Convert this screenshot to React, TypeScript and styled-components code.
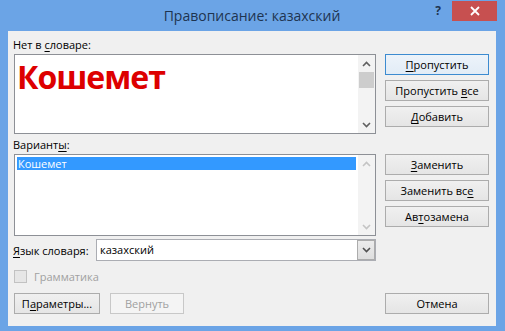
import styled, { createGlobalStyle } from "styled-components";

const GlobalStyle = createGlobalStyle`
  html, body {
    margin: 0;
    padding: 0;
    background: #6ba4e6;
  }
  * {
    box-sizing: border-box;
  }
`;

const Window = styled.div`
  width: 505px;
  height: 331px;
  background: #6ba4e6;
  display: flex;
  flex-direction: column;
  padding: 0 9px 5px 8px;
  font-family: "Open Sans", "Noto Sans", sans-serif;
  font-size: 11px;
  color: #000;
`;

const TitleBar = styled.div`
  height: 31px;
  display: grid;
  grid-template-columns: 1fr auto 1fr;
  align-items: start;
`;

const Title = styled.div`
  grid-column: 2;
  padding-top: 6px;
  font-size: 14px;
  color: #1e3450;
  white-space: nowrap;
`;

const Controls = styled.div`
  grid-column: 3;
  justify-self: end;
  display: flex;
  align-items: flex-start;
  margin-right: -1px;
`;

const HelpButton = styled.div`
  width: 28px;
  height: 21px;
  display: flex;
  align-items: center;
  justify-content: center;
  font-size: 12px;
  font-weight: 700;
  color: #1e3450;
`;

const CloseButton = styled.div`
  width: 45px;
  height: 20px;
  margin-top: 1px;
  background: #c75050;
  display: flex;
  align-items: center;
  justify-content: center;
`;

const Client = styled.div`
  flex: 1;
  background: #f0f0f0;
  display: grid;
  grid-template-columns: 362px 104px;
  column-gap: 9px;
  grid-template-rows: 17px 80px 20px 82px 25px 32px 21px;
  padding: 6px 7px 12px 6px;
`;

const Label = styled.div`
  grid-column: 1;
  display: flex;
  align-items: flex-end;
  line-height: 16px;
  margin-left: -1px;
  padding-bottom: 1px;
  white-space: nowrap;
`;

const Key = styled.span`
  text-decoration: underline;
  text-underline-offset: 2px;
`;

const Field = styled.div`
  border: 1px solid #8d9096;
  background: #fff;
  display: flex;
`;

const FieldContent = styled.div`
  flex: 1;
  padding: 2px;
  overflow: hidden;
`;

const Misspelled = styled.div`
  color: #dd0000;
  font-weight: 700;
  font-size: 32px;
  line-height: 40px;
  letter-spacing: -1px;
`;

const Selected = styled.div`
  background: #3399ff;
  color: #fff;
  height: 13px;
  line-height: 13px;
  padding-left: 1px;
`;

const ScrollBar = styled.div`
  width: 17px;
  display: flex;
  flex-direction: column;
  background: #f3f3f3;
`;

const Arrow = styled.div`
  height: 17px;
  display: flex;
  align-items: center;
  justify-content: center;
`;

const Track = styled.div`
  flex: 1;
  display: flex;
  flex-direction: column;
`;

const Thumb = styled.div`
  height: 16px;
  margin: 0 1px;
  background: #cdcdcd;
`;

const ButtonStack = styled.div`
  grid-column: 2;
  display: flex;
  flex-direction: column;
  gap: 5px;
`;

const Button = styled.div<{ $default?: boolean; $disabled?: boolean; $width?: number }>`
  height: 21px;
  width: ${(p) => (p.$width ? `${p.$width}px` : "auto")};
  display: flex;
  align-items: center;
  justify-content: center;
  white-space: nowrap;
  border: 1px solid
    ${(p) => (p.$default ? "#3c8bd0" : p.$disabled ? "#c8c8c8" : "#acacac")};
  background: ${(p) =>
    p.$disabled
      ? "#f4f4f4"
      : p.$default
      ? "linear-gradient(#ecf3fa, #e2ecf6)"
      : "linear-gradient(#f0f0f0, #e5e5e5)"};
  color: ${(p) => (p.$disabled ? "#a0a0a0" : "#000")};
`;

const LangRow = styled.div`
  grid-column: 1;
  display: flex;
  align-items: center;
  padding-top: 3px;
`;

const LangLabel = styled.div`
  width: 83px;
  margin-left: -1px;
  white-space: nowrap;
`;

const Combo = styled.div`
  flex: 1;
  height: 22px;
  border: 1px solid #abadb3;
  background: #fff;
  display: flex;
`;

const ComboText = styled.div`
  flex: 1;
  padding-left: 3px;
  line-height: 20px;
`;

const ComboDrop = styled.div`
  width: 18px;
  border: 1px solid #acacac;
  background: linear-gradient(#ececec, #dedede);
  display: flex;
  align-items: center;
  justify-content: center;
`;

const CheckRow = styled.div`
  grid-column: 1;
  display: flex;
  align-items: center;
  gap: 7px;
  color: #a0a0a0;
  padding-bottom: 2px;
`;

const CheckBox = styled.div`
  width: 13px;
  height: 13px;
  border: 1px solid #c2c2c2;
  background: #e6e6e6;
`;

const BottomLeft = styled.div`
  grid-column: 1;
  display: flex;
  gap: 10px;
`;

const Chevron = ({ up, color }: { up?: boolean; color: string }) => (
  <svg width="9" height="6" viewBox="0 0 9 6">
    <path
      d={up ? "M1 5 L4.5 1.5 L8 5" : "M1 1 L4.5 4.5 L8 1"}
      fill="none"
      stroke={color}
      strokeWidth="1.6"
    />
  </svg>
);

export default function App() {
  return (
    <>
      <GlobalStyle />
      <Window>
        <TitleBar>
          <Title>Правописание: казахский</Title>
          <Controls>
            <HelpButton>?</HelpButton>
            <CloseButton>
              <svg width="10" height="10" viewBox="0 0 10 10">
                <path d="M1 1 L9 9 M9 1 L1 9" stroke="#fff" strokeWidth="1.8" />
              </svg>
            </CloseButton>
          </Controls>
        </TitleBar>
        <Client>
          <Label>
            Нет в&nbsp;<Key>с</Key>ловаре:
          </Label>
          <div />
          <Field>
            <FieldContent>
              <Misspelled>Кошемет</Misspelled>
            </FieldContent>
            <ScrollBar>
              <Arrow>
                <Chevron up color="#606060" />
              </Arrow>
              <Track>
                <Thumb />
              </Track>
              <Arrow>
                <Chevron color="#606060" />
              </Arrow>
            </ScrollBar>
          </Field>
          <ButtonStack>
            <Button $default>
              <Key>П</Key>ропустить
            </Button>
            <Button>
              Пропустить&nbsp;<Key>в</Key>се
            </Button>
            <Button>
              <Key>Д</Key>обавить
            </Button>
          </ButtonStack>
          <Label>
            Вариант<Key>ы</Key>:
          </Label>
          <div />
          <Field>
            <FieldContent>
              <Selected>Кошемет</Selected>
            </FieldContent>
            <ScrollBar>
              <Arrow>
                <Chevron up color="#c4c4c4" />
              </Arrow>
              <Track />
              <Arrow>
                <Chevron color="#c4c4c4" />
              </Arrow>
            </ScrollBar>
          </Field>
          <ButtonStack>
            <Button>
              <Key>З</Key>аменить
            </Button>
            <Button>
              Заменить вс<Key>е</Key>
            </Button>
            <Button>
              Ав<Key>т</Key>озамена
            </Button>
          </ButtonStack>
          <LangRow>
            <LangLabel>
              <Key>Я</Key>зык словаря:
            </LangLabel>
            <Combo>
              <ComboText>казахский</ComboText>
              <ComboDrop>
                <Chevron color="#505050" />
              </ComboDrop>
            </Combo>
          </LangRow>
          <div />
          <CheckRow>
            <CheckBox />
            Грамматика
          </CheckRow>
          <div />
          <BottomLeft>
            <Button $width={86}>
              П<Key>а</Key>раметры...
            </Button>
            <Button $width={74} $disabled>
              Вернуть
            </Button>
          </BottomLeft>
          <ButtonStack>
            <Button>Отмена</Button>
          </ButtonStack>
        </Client>
      </Window>
    </>
  );
}
